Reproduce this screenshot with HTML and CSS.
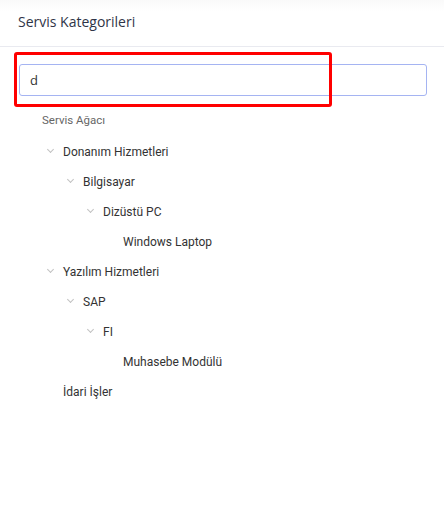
FILE: index.html
```html
<!DOCTYPE html>
<html lang="tr">
<head>
    <meta charset="UTF-8">
    <meta name="viewport" content="width=device-width, initial-scale=1.0">
    <title>Servis Kategorileri</title>
    <link rel="stylesheet" href="styles.css">
</head>
<body>

    <div class="panel">
        <div class="panel-header">
            <h2>Servis Kategorileri</h2>
        </div>

        <div class="panel-body">
            <div class="search">
                <input type="text" class="search-input" value="d">
                <span class="highlight"></span>
            </div>

            <div class="tree-label">Servis Ağacı</div>

            <ul class="tree">
                <li class="node open lvl-0"><span class="caret"></span>Donanım Hizmetleri</li>
                <li class="node open lvl-1"><span class="caret"></span>Bilgisayar</li>
                <li class="node open lvl-2"><span class="caret"></span>Dizüstü PC</li>
                <li class="node leaf lvl-3">Windows Laptop</li>
                <li class="node open lvl-0"><span class="caret"></span>Yazılım Hizmetleri</li>
                <li class="node open lvl-1"><span class="caret"></span>SAP</li>
                <li class="node open lvl-2"><span class="caret"></span>FI</li>
                <li class="node leaf lvl-3">Muhasebe Modülü</li>
                <li class="node leaf lvl-0">İdari İşler</li>
            </ul>
        </div>
    </div>

</body>
</html>
```

FILE: styles.css
```css
body {
    margin: 0;
    padding: 0;
    background: #fff;
    font-family: Roboto, "Noto Sans", sans-serif;
    color: #333;
}

.panel {
    background: linear-gradient(#f9f9f9, #fff 12px);
    padding-top: 12px;
}

.panel-header {
    height: 34px;
    padding: 0 18px;
    border-bottom: 1px solid #e9eaf0;
}

.panel-header h2 {
    margin: 0;
    font-family: "Open Sans", sans-serif;
    font-size: 14px;
    font-weight: 500;
    line-height: 19px;
    color: #2f3547;
}

.panel-body {
    padding: 17px 17px 0 19px;
}

.search {
    position: relative;
}

.search-input {
    display: block;
    box-sizing: border-box;
    width: 408px;
    height: 32px;
    padding: 0 10px;
    border: 1px solid #a5b4f2;
    border-radius: 3px;
    font-family: "Open Sans", sans-serif;
    font-size: 13px;
    color: #333;
    outline: none;
}

/* kırmızı vurgu çerçevesi */
.highlight {
    position: absolute;
    left: -5px;
    top: -12px;
    width: 318px;
    height: 55px;
    box-sizing: border-box;
    border: 3px solid #ff0000;
    border-radius: 3px;
    pointer-events: none;
}

.tree-label {
    margin: 16px 0 0 23px;
    font-size: 11.5px;
    line-height: 16px;
    color: #666;
}

.tree {
    margin: 9px 0 0 0;
    padding: 0;
    list-style: none;
}

.node {
    display: flex;
    align-items: center;
    height: 30px;
    font-size: 12px;
    color: #333;
}

.lvl-0 { padding-left: 44px; }
.lvl-1 { padding-left: 64px; }
.lvl-2 { padding-left: 84px; }
.lvl-3 { padding-left: 104px; }

.node.open {
    margin-left: -18px;
}

.caret {
    width: 18px;
    height: 10px;
    position: relative;
}

.caret::before {
    content: "";
    position: absolute;
    left: 3px;
    top: 0;
    width: 4px;
    height: 4px;
    border-right: 1px solid #c2c2c2;
    border-bottom: 1px solid #c2c2c2;
    transform: rotate(45deg);
}
```
